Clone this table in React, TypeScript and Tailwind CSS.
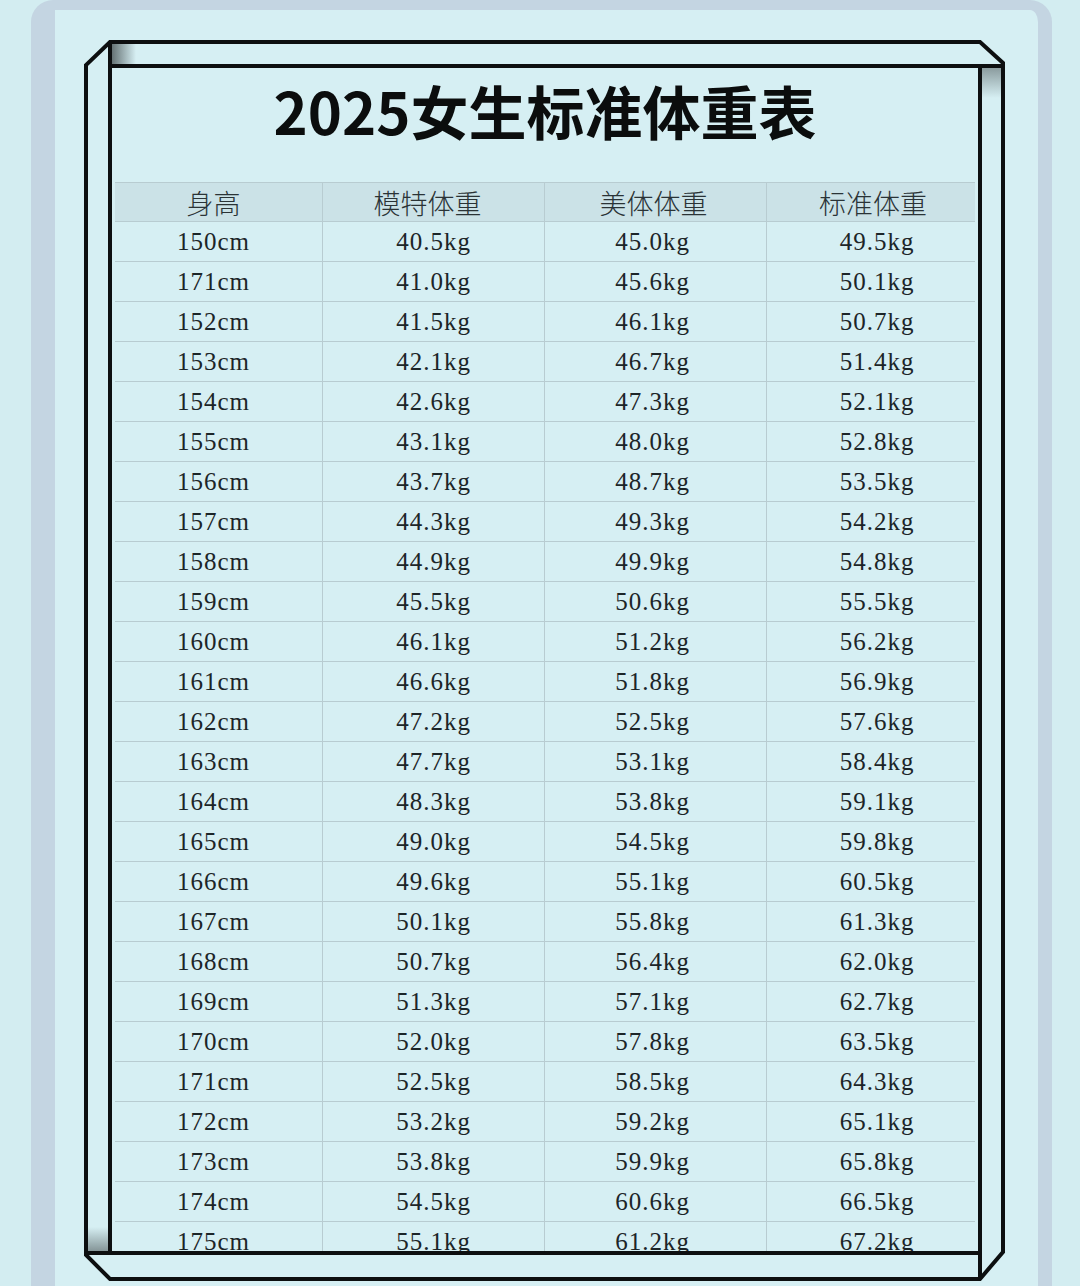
import React from 'react';

type Row = [string, string, string, string];

const rows: Row[] = [
    ['150cm', '40.5kg', '45.0kg', '49.5kg'],
    ['171cm', '41.0kg', '45.6kg', '50.1kg'],
    ['152cm', '41.5kg', '46.1kg', '50.7kg'],
    ['153cm', '42.1kg', '46.7kg', '51.4kg'],
    ['154cm', '42.6kg', '47.3kg', '52.1kg'],
    ['155cm', '43.1kg', '48.0kg', '52.8kg'],
    ['156cm', '43.7kg', '48.7kg', '53.5kg'],
    ['157cm', '44.3kg', '49.3kg', '54.2kg'],
    ['158cm', '44.9kg', '49.9kg', '54.8kg'],
    ['159cm', '45.5kg', '50.6kg', '55.5kg'],
    ['160cm', '46.1kg', '51.2kg', '56.2kg'],
    ['161cm', '46.6kg', '51.8kg', '56.9kg'],
    ['162cm', '47.2kg', '52.5kg', '57.6kg'],
    ['163cm', '47.7kg', '53.1kg', '58.4kg'],
    ['164cm', '48.3kg', '53.8kg', '59.1kg'],
    ['165cm', '49.0kg', '54.5kg', '59.8kg'],
    ['166cm', '49.6kg', '55.1kg', '60.5kg'],
    ['167cm', '50.1kg', '55.8kg', '61.3kg'],
    ['168cm', '50.7kg', '56.4kg', '62.0kg'],
    ['169cm', '51.3kg', '57.1kg', '62.7kg'],
    ['170cm', '52.0kg', '57.8kg', '63.5kg'],
    ['171cm', '52.5kg', '58.5kg', '64.3kg'],
    ['172cm', '53.2kg', '59.2kg', '65.1kg'],
    ['173cm', '53.8kg', '59.9kg', '65.8kg'],
    ['174cm', '54.5kg', '60.6kg', '66.5kg'],
    ['175cm', '55.1kg', '61.2kg', '67.2kg'],
];

const headers = ['身高', '模特体重', '美体体重', '标准体重'];

const gridCols = 'grid grid-cols-[207px_222px_222px_209px]';

// per-column nudges so the text sits where the picture has it
const cellPad = ['pr-[10px]', 'border-l border-[#b8ccd1]', 'border-l border-[#b8ccd1] pr-[6px]', 'border-l border-[#b8ccd1] pl-[12px]'];
const headPad = ['pr-[10px]', 'border-l border-[#b8ccd1] pr-[12px]', 'border-l border-[#b8ccd1] pr-[4px]', 'border-l border-[#b8ccd1] pl-[4px]'];

// 3D bevel drawn around the inner box
function Bevel() {
    return (
        <svg
            className="absolute left-[-3px] top-[-3px] pointer-events-none"
            width={923}
            height={1243}
            viewBox="-3 -3 923 1243"
        >
            <defs>
                <linearGradient id="shadeTop" x1="0" y1="0" x2="1" y2="0">
                    <stop offset="0%" stopColor="#1a1f20" stopOpacity={0.6} />
                    <stop offset="100%" stopColor="#1a1f20" stopOpacity={0} />
                </linearGradient>
                <linearGradient id="shadeRight" x1="0" y1="0" x2="0" y2="1">
                    <stop offset="0%" stopColor="#1a1f20" stopOpacity={0.4} />
                    <stop offset="100%" stopColor="#1a1f20" stopOpacity={0} />
                </linearGradient>
                <linearGradient id="shadeLeft" x1="0" y1="1" x2="0" y2="0">
                    <stop offset="0%" stopColor="#1a1f20" stopOpacity={0.45} />
                    <stop offset="100%" stopColor="#1a1f20" stopOpacity={0} />
                </linearGradient>
            </defs>
            <rect x={26} y={2} width={24} height={20} fill="url(#shadeTop)" />
            <rect x={896} y={26} width={19} height={30} fill="url(#shadeRight)" />
            <rect x={2} y={1185} width={20} height={25} fill="url(#shadeLeft)" />
            <polygon
                points="24,0 894,0 917,21 917,1210 894,1237 24,1237 0,1213 0,23"
                fill="none"
                stroke="#0d0f10"
                strokeWidth={4}
                strokeLinejoin="miter"
            />
            <line x1={24} y1={0} x2={24} y2={24} stroke="#0d0f10" strokeWidth={4} />
            <line x1={894} y1={24} x2={917} y2={24} stroke="#0d0f10" strokeWidth={4} />
            <line x1={894} y1={1211} x2={894} y2={1237} stroke="#0d0f10" strokeWidth={4} />
            <line x1={0} y1={1211} x2={24} y2={1211} stroke="#0d0f10" strokeWidth={4} />
        </svg>
    );
}

export default function App() {
    return (
        <div className="h-[1286px] w-[1080px] overflow-hidden bg-[#d3edf1] pl-[31px] pr-[28px]">
            <div className="h-[1300px] bg-[#d6eff3] border-[#c4d5e2] border-l-[24px] border-r-[14px] border-t-[10px] rounded-t-[22px]">
                <div className="relative ml-[31px] mt-[32px] w-[917px] h-[1237px] pl-[22px] pr-[21px] pt-[22px] pb-[24px]">
                    <div className="h-full border-[4px] border-[#0d0f10] overflow-hidden bg-[#d6eff3]">
                        <div
                            className="h-[114px] pt-[13px] text-center text-[58px] leading-[58px] font-bold text-[#0b0d0d]"
                            style={{ fontFamily: '"Noto Sans CJK SC", "Noto Sans", sans-serif' }}
                        >
                            2025女生标准体重表
                        </div>
                        <div className="mx-[3px]">
                            <div
                                className={`${gridCols} h-[39px] bg-[#cbe2e7] border-t border-[#b8ccd1] text-[27px] font-light text-[#2a3336]`}
                                style={{ fontFamily: '"Noto Sans CJK SC", sans-serif' }}
                            >
                                {headers.map((h, i) => (
                                    <div key={h} className={`flex items-center justify-center leading-none ${headPad[i]}`}>
                                        {h}
                                    </div>
                                ))}
                            </div>
                            {rows.map((r, ri) => (
                                <div
                                    key={ri}
                                    className={`${gridCols} h-[40px] border-t border-[#b8ccd1] text-[25px] tracking-[1px] text-[#1c2528]`}
                                    style={{ fontFamily: '"Liberation Serif", serif' }}
                                >
                                    {r.map((c, ci) => (
                                        <div key={ci} className={`flex items-center justify-center leading-none ${cellPad[ci]}`}>
                                            {c}
                                        </div>
                                    ))}
                                </div>
                            ))}
                        </div>
                    </div>
                    <Bevel />
                </div>
            </div>
        </div>
    );
}
